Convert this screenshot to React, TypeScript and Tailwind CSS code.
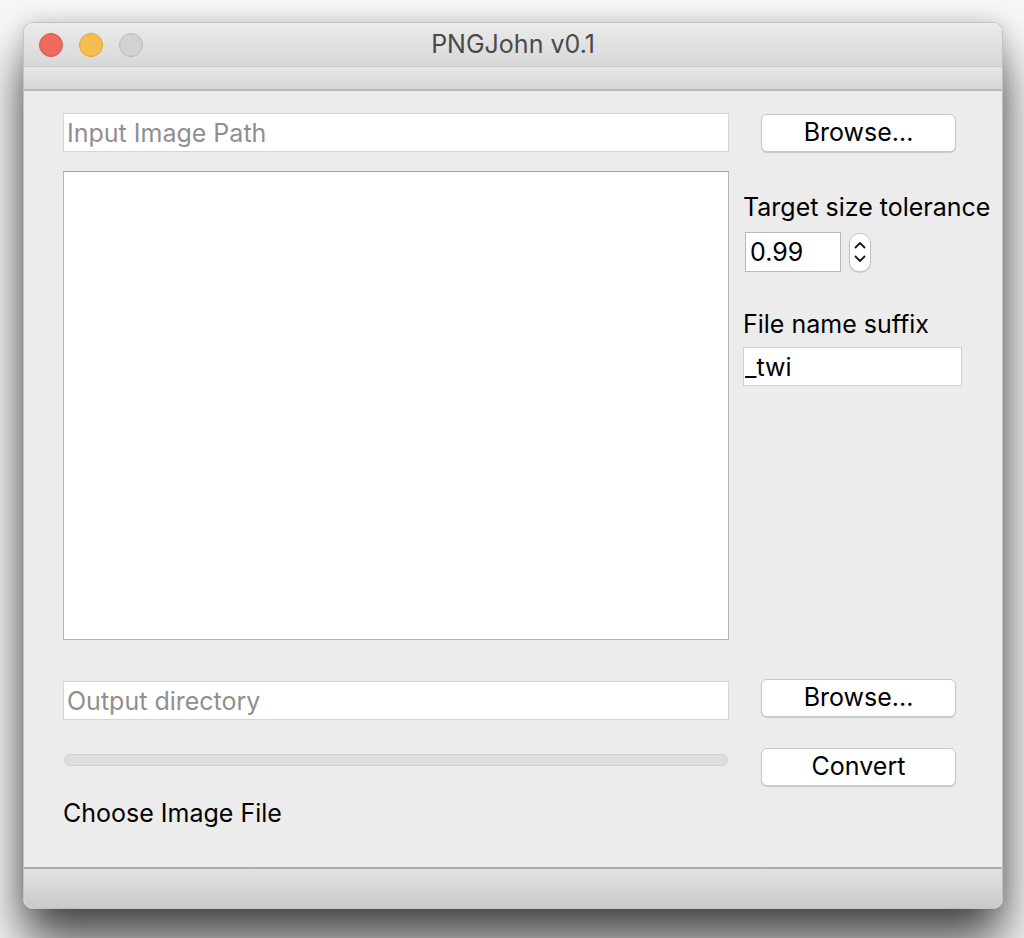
import React, { useState } from 'react';

// macOS-style window for the PNGJohn converter
const FONT = "font-['Inter','Liberation_Sans',sans-serif]";

function MacButton({ label }: { label: string }) {
  return (
    <button className="w-[195px] h-[38px] bg-white rounded-[6px] border border-[#c8c8c8] shadow-[0_1px_1px_rgba(0,0,0,0.15)] text-[25px] text-black flex items-center justify-center">
      {label}
    </button>
  );
}

function Stepper() {
  return (
    <div className="w-[22px] h-[39px] bg-white rounded-[10px] border border-[#c4c4c4] shadow-[0_1px_1px_rgba(0,0,0,0.12)] flex flex-col items-center justify-center gap-[6px]">
      <svg width="12" height="8" viewBox="0 0 12 8" fill="none">
        <path d="M1.5 6.5 L6 2 L10.5 6.5" stroke="#222" strokeWidth="2" strokeLinecap="round" strokeLinejoin="round" />
      </svg>
      <svg width="12" height="8" viewBox="0 0 12 8" fill="none">
        <path d="M1.5 1.5 L6 6 L10.5 1.5" stroke="#222" strokeWidth="2" strokeLinecap="round" strokeLinejoin="round" />
      </svg>
    </div>
  );
}

export default function App() {
  const [inputPath, setInputPath] = useState('');
  const [outputDir, setOutputDir] = useState('');
  const [tolerance, setTolerance] = useState('0.99');
  const [suffix, setSuffix] = useState('_twi');

  return (
    <div className={`w-full h-[938px] bg-[#f7f7f7] overflow-hidden pt-[22px] pl-[23px] ${FONT}`}>
      <div className="w-[980px] flex flex-col rounded-[10px] overflow-hidden border border-[#c2c2c2] shadow-[0_34px_50px_rgba(0,0,0,0.7),0_0_20px_rgba(0,0,0,0.15)]">
        {/* Title bar */}
        <div className="h-[44px] bg-gradient-to-b from-[#ebebeb] to-[#d8d8d8] flex items-center relative border-b border-[#c9c9c9]">
          <div className="flex items-center gap-[16px] pl-[15px]">
            <div className="w-[24px] h-[24px] rounded-full bg-[#ee6a5f] border border-[#d8574c]" />
            <div className="w-[24px] h-[24px] rounded-full bg-[#f6be4f] border border-[#dfa43a]" />
            <div className="w-[24px] h-[24px] rounded-full bg-[#d2d2d2] border border-[#bcbcbc]" />
          </div>
          <div className="absolute inset-0 flex items-center justify-center text-[25px] text-[#4a4a4a] pointer-events-none">
            PNGJohn v0.1
          </div>
        </div>

        {/* Toolbar strip */}
        <div className="h-[24px] bg-gradient-to-b from-[#e6e6e6] to-[#d6d6d6] border-b-2 border-[#b9b9b9]" />

        {/* Content */}
        <div className="h-[776px] bg-[#ececec] pl-[39px] pt-[22px] flex flex-col">
          <div className="flex items-center">
            <input
              value={inputPath}
              onChange={(e) => setInputPath(e.target.value)}
              placeholder="Input Image Path"
              className="w-[666px] h-[39px] bg-white border border-[#d4d4d4] px-[3px] text-[25px] text-black placeholder:text-[#8f8f8f] outline-none"
            />
            <div className="ml-[32px]">
              <MacButton label="Browse..." />
            </div>
          </div>

          <div className="flex mt-[19px]">
            <div className="w-[666px] h-[469px] bg-white border border-[#b4b4b4] border-t-[#a6a6a6]" />
            <div className="ml-[14px] flex flex-col">
              <div className="text-[25px] text-black leading-[30px] mt-[21px] whitespace-nowrap">Target size tolerance</div>
              <div className="flex items-center mt-[10px] ml-[2px] gap-[8px]">
                <input
                  value={tolerance}
                  onChange={(e) => setTolerance(e.target.value)}
                  className="w-[96px] h-[40px] bg-white border border-[#b9b9b9] px-[4px] text-[25px] text-black outline-none"
                />
                <Stepper />
              </div>
              <div className="text-[25px] text-black leading-[30px] mt-[37px]">File name suffix</div>
              <input
                value={suffix}
                onChange={(e) => setSuffix(e.target.value)}
                className="w-[219px] h-[39px] mt-[8px] bg-white border border-[#d0d0d0] px-[1px] text-[25px] text-black outline-none"
              />
            </div>
          </div>

          <div className="flex items-start mt-[39px]">
            <input
              value={outputDir}
              onChange={(e) => setOutputDir(e.target.value)}
              placeholder="Output directory"
              className="w-[666px] h-[39px] mt-[2px] bg-white border border-[#d4d4d4] px-[3px] text-[25px] text-black placeholder:text-[#8f8f8f] outline-none"
            />
            <div className="ml-[32px]">
              <MacButton label="Browse..." />
            </div>
          </div>

          <div className="flex items-start mt-[28px]">
            <div className="w-[664px] ml-[1px] mt-[6px] h-[12px] rounded-full bg-[#dedede] border border-[#d0d0d0]" />
            <div className="ml-[33px]">
              <MacButton label="Convert" />
            </div>
          </div>

          <div className="text-[25px] text-black leading-[30px] mt-[12px]">Choose Image File</div>
        </div>

        {/* Bottom bar */}
        <div className="h-[41px] bg-gradient-to-b from-[#e3e3e3] to-[#c9c9c9] border-t-2 border-[#acacac]" />
      </div>
    </div>
  );
}
